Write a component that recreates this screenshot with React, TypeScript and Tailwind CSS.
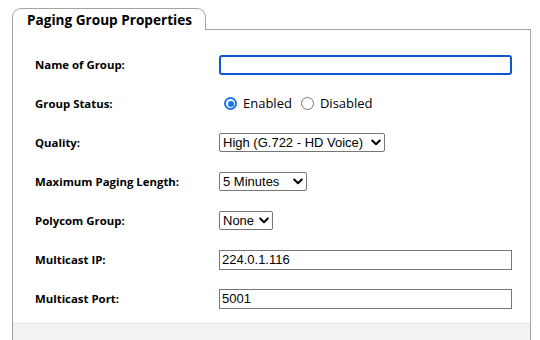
import React from "react";

const labelFont = { fontFamily: '"Open Sans", "DejaVu Sans", sans-serif' };

function Chevron() {
  return (
    <svg width="10" height="7" viewBox="0 0 10 7" className="ml-1 shrink-0">
      <path d="M1.2 1.5 L5 5.2 L8.8 1.5" fill="none" stroke="#000" strokeWidth="2" strokeLinecap="round" strokeLinejoin="round" />
    </svg>
  );
}

function Select({ value, width }: { value: string; width: string }) {
  return (
    <div className={`flex h-[19px] items-center justify-between border border-[#767676] rounded-[2px] bg-white pl-[3px] pr-[3px] text-[13px] text-black font-['Liberation_Sans',Arial,sans-serif] ${width}`}>
      <span className="whitespace-pre">{value}</span>
      <Chevron />
    </div>
  );
}

function Radio({ checked, label }: { checked?: boolean; label: string }) {
  return (
    <label className="flex items-center gap-[6px] text-[13px] text-black" style={labelFont}>
      {checked ? (
        <span className="flex h-[13px] w-[13px] items-center justify-center rounded-full bg-[#1a73e8]">
          <span className="h-[9px] w-[9px] rounded-full bg-white flex items-center justify-center">
            <span className="h-[6px] w-[6px] rounded-full bg-[#1a73e8]" />
          </span>
        </span>
      ) : (
        <span className="h-[13px] w-[13px] rounded-full border border-[#767676] bg-white" />
      )}
      <span>{label}</span>
    </label>
  );
}

function Row({ label, children }: { label: string; children: React.ReactNode }) {
  return (
    <div className="flex h-[39px] items-center">
      <div className="w-[206px] pl-[22px] text-[11.4px] font-bold text-black" style={labelFont}>
        {label}
      </div>
      <div className="flex items-center">{children}</div>
    </div>
  );
}

export default function App() {
  return (
    <div className="w-[540px] h-[340px] bg-white overflow-hidden pt-[8px]">
      <div className="flex">
        <div className="ml-[12px] w-[194px] h-[22px] border border-b-0 border-[#a3a3a3] rounded-t-[9px] pl-[14px] pt-[1px] text-[13.6px] font-bold text-black" style={labelFont}>
          Paging Group Properties
        </div>
        <div className="flex-1 border-b border-[#a3a3a3] mr-[9px]" />
      </div>
      <div className="ml-[12px] mr-[9px] border-l border-r border-[#a3a3a3] pt-[15px]">
        <Row label="Name of Group:">
          <input
            className="w-[293px] h-[20px] border-2 border-[#0b57d0] rounded-[3px] outline-none bg-white"
            defaultValue=""
          />
        </Row>
        <Row label="Group Status:">
          <div className="flex items-center gap-[9px] pl-[5px]">
            <Radio checked label="Enabled" />
            <Radio label="Disabled" />
          </div>
        </Row>
        <Row label="Quality:">
          <Select value="High (G.722 - HD Voice)" width="w-[166px]" />
        </Row>
        <Row label="Maximum Paging Length:">
          <Select value="5 Minutes" width="w-[88px]" />
        </Row>
        <Row label="Polycom Group:">
          <Select value="None" width="w-[54px]" />
        </Row>
        <Row label="Multicast IP:">
          <input
            className="w-[293px] h-[20px] border border-[#767676] px-[2px] text-[13px] text-black outline-none font-['Liberation_Sans',Arial,sans-serif]"
            defaultValue="224.0.1.116"
          />
        </Row>
        <Row label="Multicast Port:">
          <input
            className="w-[293px] h-[20px] border border-[#767676] px-[2px] text-[13px] text-black outline-none font-['Liberation_Sans',Arial,sans-serif]"
            defaultValue="5001"
          />
        </Row>
        <div className="h-[5px]" />
        <div className="h-[20px] bg-[#f2f2f2] border-t border-[#e6e6e6]" />
      </div>
    </div>
  );
}
